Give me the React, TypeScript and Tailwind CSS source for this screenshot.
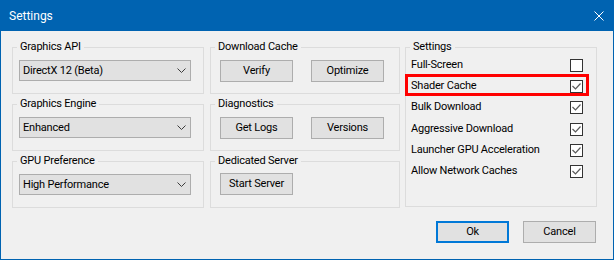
import React from "react"

const FONT = "font-['Roboto',sans-serif]"

function GroupBox({ label, className = "", children }: any) {
  return (
    <div className={`relative border border-[#dcdcdc] ${className}`}>
      <span className="absolute left-[4px] top-[-9px] bg-[#f0f0f0] px-[3px] leading-[16px] whitespace-nowrap">{label}</span>
      {children}
    </div>
  )
}

function Dropdown({ value, className = "" }: any) {
  return (
    <div className={`ml-[6px] w-[172px] h-[21px] border border-[#adadad] bg-[#e1e1e1] flex items-center justify-between pl-[3px] pr-[4px] ${className}`}>
      <span className="leading-none">{value}</span>
      <svg width="9" height="5" viewBox="0 0 9 5">
        <path d="M0.5 0.5 L4.5 4.5 L8.5 0.5" fill="none" stroke="#3c3c3c" strokeWidth="1" />
      </svg>
    </div>
  )
}

function Btn({ children, focused = false }: any) {
  return (
    <div
      className={`w-[73px] h-[22px] flex items-center justify-center bg-[#e1e1e1] ${
        focused ? "border-2 border-[#0078d7]" : "border border-[#adadad]"
      }`}
    >
      {children}
    </div>
  )
}

function CheckBox({ checked }: { checked: boolean }) {
  return (
    <span className="w-[13px] h-[13px] shrink-0 border border-[#333333] bg-white flex items-center justify-center">
      {checked && (
        <svg width="11" height="11" viewBox="0 0 11 11">
          <path d="M1.5 5 L4.5 8 L9.5 2.5" fill="none" stroke="#5a5a5a" strokeWidth="1.2" />
        </svg>
      )}
    </span>
  )
}

const options = [
  { label: "Full-Screen", checked: false },
  { label: "Shader Cache", checked: true, marked: true },
  { label: "Bulk Download", checked: true },
  { label: "Aggressive Download", checked: true, tall: true },
  { label: "Launcher GPU Acceleration", checked: true },
  { label: "Allow Network Caches", checked: true },
]

export default function App() {
  return (
    <div className={`w-[614px] h-[260px] flex flex-col bg-[#f0f0f0] text-[11px] tracking-[-0.2px] text-black ${FONT}`}>
      {/* title bar */}
      <div className="h-[31px] shrink-0 bg-[#0063b1] flex items-center justify-between pl-[9px] pr-[10px] text-white text-[12px] tracking-normal">
        <span>Settings</span>
        <svg width="10" height="10" viewBox="0 0 10 10">
          <path d="M0.5 0.5 L9.5 9.5 M9.5 0.5 L0.5 9.5" stroke="#ffffff" strokeWidth="1" />
        </svg>
      </div>

      <div className="flex-1 border-x border-b border-[#0063b1] pl-[11px] pr-[16px] pt-[16px]">
        <div className="flex">
          {/* left column */}
          <div className="w-[192px] flex flex-col gap-[10px]">
            <GroupBox label="Graphics API" className="h-[47px] pt-[12px]">
              <Dropdown value="DirectX 12 (Beta)" />
            </GroupBox>
            <GroupBox label="Graphics Engine" className="h-[47px] pt-[12px]">
              <Dropdown value="Enhanced" />
            </GroupBox>
            <GroupBox label="GPU Preference" className="h-[47px] pt-[12px]">
              <Dropdown value="High Performance" />
            </GroupBox>
          </div>

          {/* middle column */}
          <div className="w-[190px] ml-[6px] flex flex-col gap-[10px]">
            <GroupBox label="Download Cache" className="h-[47px] pt-[12px] pl-[9px] flex gap-[18px] items-start">
              <Btn>Verify</Btn>
              <Btn>Optimize</Btn>
            </GroupBox>
            <GroupBox label="Diagnostics" className="h-[47px] pt-[12px] pl-[9px] flex gap-[18px] items-start">
              <Btn>Get Logs</Btn>
              <Btn>Versions</Btn>
            </GroupBox>
            <GroupBox label="Dedicated Server" className="h-[47px] pt-[11px] pl-[9px] flex items-start">
              <Btn>Start Server</Btn>
            </GroupBox>
          </div>

          {/* right column */}
          <div className="w-[192px] ml-[5px]">
            <GroupBox label="Settings" className="h-[160px] pt-[7px]">
              {options.map((o) => (
                <div
                  key={o.label}
                  className={`relative flex items-center justify-between pl-[5px] pr-[13px] ${o.tall ? "h-[22px]" : "h-[21px]"}`}
                >
                  <span>{o.label}</span>
                  <CheckBox checked={o.checked} />
                  {o.marked && (
                    <div className="absolute left-[-1px] top-[-2px] w-[184px] h-[22px] border-[3px] border-[#ff0000]" />
                  )}
                </div>
              ))}
            </GroupBox>
          </div>
        </div>

        {/* dialog buttons */}
        <div className="flex justify-end gap-[14px] mt-[13px] pr-[1px]">
          <Btn focused>Ok</Btn>
          <Btn>Cancel</Btn>
        </div>
      </div>
    </div>
  )
}
